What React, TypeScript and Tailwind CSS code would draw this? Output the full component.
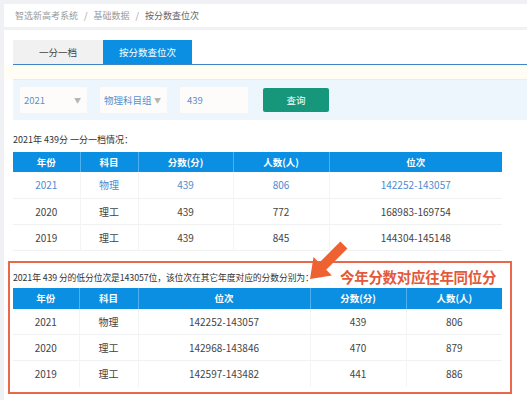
const rows1 = [
    { year: '2021', kind: '物理', score: '439', count: '806', rank: '142252-143057', hl: true },
    { year: '2020', kind: '理工', score: '439', count: '772', rank: '168983-169754' },
    { year: '2019', kind: '理工', score: '439', count: '845', rank: '144304-145148' },
];

const rows2 = [
    { year: '2021', kind: '物理', rank: '142252-143057', score: '439', count: '806' },
    { year: '2020', kind: '理工', rank: '142968-143846', score: '470', count: '879' },
    { year: '2019', kind: '理工', rank: '142597-143482', score: '441', count: '886' },
];

const th = 'font-bold text-white text-[9.5px] text-center border-r border-[#4fb0f2] last:border-r-0';
const td = 'text-center border-r border-[#f3f4f6] last:border-r-0';

function Select({ value, width }: { value: string; width: string }) {
    return (
        <div className={`${width} h-[26px] bg-[#fdfcfa] flex items-center justify-between pl-[4px] pr-[6px] text-[9.5px] text-[#5b8fcb] whitespace-nowrap`}>
            <span>{value}</span>
            <span className="text-[#b5b5b5] text-[7px]">▼</span>
        </div>
    );
}

export default function App() {
    return (
        <div
            className="relative w-[527px] h-[400px] overflow-hidden bg-[#eff1f4] pt-[4px] pl-[4px]"
            style={{ fontFamily: '"Noto Sans CJK SC", "Noto Sans", sans-serif' }}>
            {/* breadcrumb */}
            <div className="h-[23px] bg-white flex items-center pl-[11px] text-[9px] text-[#9a9a9a] gap-[6px]">
                <span>智选新高考系统</span>
                <span>/</span>
                <span>基础数据</span>
                <span>/</span>
                <span className="text-[#666]">按分数查位次</span>
            </div>

            <div className="mt-[3px] bg-white pl-[9px] pt-[10px] h-[400px]">
                {/* tabs */}
                <div className="flex h-[25px] border-b border-[#3f86c6]">
                    <div className="w-[90px] bg-[#f1f1f1] flex items-center justify-center text-[9.5px] text-[#444]">
                        一分一档
                    </div>
                    <div className="w-[89px] bg-[#0b8fe2] flex items-center justify-center text-[9.5px] text-white">
                        按分数查位次
                    </div>
                </div>
                <div className="h-[14px] bg-[#fffdf4] -ml-[9px]" />

                {/* filter */}
                <div className="h-[41px] bg-[#edf6fd] border-t border-[#e6eef5] flex items-center pl-[7px] gap-[13px]">
                    <Select value="2021" width="w-[67px]" />
                    <Select value="物理科目组" width="w-[67px]" />
                    <div className="w-[68px] h-[26px] bg-[#fdfcfa] flex items-center pl-[7px] text-[9.5px] text-[#5b8fcb]">
                        439
                    </div>
                    <div className="ml-[2px] w-[66px] h-[24px] bg-[#16977c] rounded-[2px] flex items-center justify-center text-[9.5px] text-white">
                        查询
                    </div>
                </div>

                <div className="h-[32px] pt-[14px] text-[9px] leading-[12px] text-[#333] whitespace-nowrap">
                    2021年 439分 一分一档情况：
                </div>

                <table className="w-[489px] table-fixed border-collapse">
                    <colgroup>
                        <col className="w-[67px]" />
                        <col className="w-[58px]" />
                        <col className="w-[95px]" />
                        <col className="w-[96px]" />
                        <col className="w-[173px]" />
                    </colgroup>
                    <thead>
                        <tr className="h-[20px] bg-[#0b8fe2]">
                            <th className={th}>年份</th>
                            <th className={th}>科目</th>
                            <th className={th}>分数(分)</th>
                            <th className={th}>人数(人)</th>
                            <th className={th}>位次</th>
                        </tr>
                    </thead>
                    <tbody>
                        {rows1.map((r) => (
                            <tr
                                key={r.year}
                                className={`h-[26px] border-b border-[#f0f1f3] text-[10px] ${r.hl ? 'text-[#4e8bd0]' : 'text-[#444]'}`}>
                                <td className={td}>{r.year}</td>
                                <td className={td}>{r.kind}</td>
                                <td className={td}>{r.score}</td>
                                <td className={td}>{r.count}</td>
                                <td className={td}>{r.rank}</td>
                            </tr>
                        ))}
                    </tbody>
                </table>

                {/* highlighted section */}
                <div className="mt-[10px] -ml-[5px] w-[504px] border-2 border-[#e9674b] pl-[3px] pt-[9px] pb-[5px]">
                    <div className="h-[12px] leading-[12px] text-[8.8px] tracking-[-0.1px] text-[#333] mb-[4px] whitespace-nowrap">
                        2021年 439 分的低分位次是143057位，该位次在其它年度对应的分数分别为：
                    </div>
                    <table className="w-[489px] table-fixed border-collapse">
                        <colgroup>
                            <col className="w-[66px]" />
                            <col className="w-[59px]" />
                            <col className="w-[172px]" />
                            <col className="w-[96px]" />
                            <col className="w-[96px]" />
                        </colgroup>
                        <thead>
                            <tr className="h-[21px] bg-[#0b8fe2]">
                                <th className={th}>年份</th>
                                <th className={th}>科目</th>
                                <th className={th}>位次</th>
                                <th className={th}>分数(分)</th>
                                <th className={th}>人数(人)</th>
                            </tr>
                        </thead>
                        <tbody>
                            {rows2.map((r) => (
                                <tr key={r.year} className="h-[26px] border-b border-[#f0f1f3] last:border-b-0 text-[10px] text-[#444]">
                                    <td className={td}>{r.year}</td>
                                    <td className={td}>{r.kind}</td>
                                    <td className={td}>{r.rank}</td>
                                    <td className={td}>{r.score}</td>
                                    <td className={td}>{r.count}</td>
                                </tr>
                            ))}
                        </tbody>
                    </table>
                </div>
            </div>

            {/* annotation */}
            <svg className="absolute left-[300px] top-[230px]" width="60" height="60" viewBox="0 0 60 60">
                <polygon
                    points="10,49 31.9,45.5 26.2,39.8 47.4,18.6 40.4,11.6 19.2,32.8 13.5,27.1"
                    fill="#ee6231"
                />
            </svg>
            <div className="absolute left-[340px] top-[266px] text-[14.5px] font-bold text-[#e2593b] tracking-[-0.3px]">
                今年分数对应往年同位分
            </div>
        </div>
    );
}
